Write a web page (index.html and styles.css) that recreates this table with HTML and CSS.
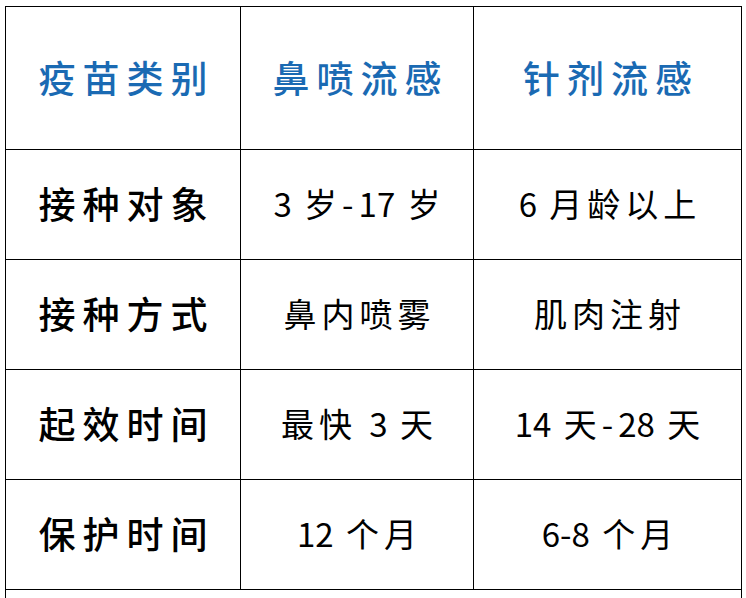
FILE: index.html
```html
<!DOCTYPE html>
<html lang="zh-CN">
<head>
<meta charset="utf-8">
<title>疫苗对比</title>
<link rel="stylesheet" href="styles.css">
</head>
<body>
<div class="page">
<table class="vax">
  <colgroup>
    <col class="c1">
    <col class="c2">
    <col class="c3">
  </colgroup>
  <tr class="head">
    <th>疫苗类别</th>
    <th>鼻喷流感</th>
    <th>针剂流感</th>
  </tr>
  <tr class="row">
    <td class="label">接种对象</td>
    <td class="val"><span class="n">3</span> 岁-<span class="n">17</span> 岁</td>
    <td class="val"><span class="n">6</span> 月龄以上</td>
  </tr>
  <tr class="row">
    <td class="label">接种方式</td>
    <td class="val">鼻内喷雾</td>
    <td class="val">肌肉注射</td>
  </tr>
  <tr class="row">
    <td class="label">起效时间</td>
    <td class="val">最快 <span class="n">3</span> 天</td>
    <td class="val"><span class="n">14</span> 天-<span class="n">28</span> 天</td>
  </tr>
  <tr class="row">
    <td class="label">保护时间</td>
    <td class="val"><span class="n">12</span> 个月</td>
    <td class="val"><span class="n">6-8</span> 个月</td>
  </tr>
  <tr class="rest">
    <td colspan="3"></td>
  </tr>
</table>
</div>
</body>
</html>
```

FILE: styles.css
```css
html, body {
  margin: 0;
  padding: 0;
  background: #ffffff;
}

.page {
  padding: 6px 0 0 5px;
  height: 592px;
  overflow: hidden;
}

.vax {
  border-collapse: collapse;
  table-layout: fixed;
  width: 736px;
  font-family: "Noto Sans CJK SC", sans-serif;
  color: #000;
}

.c1 { width: 235px; }
.c2 { width: 233px; }
.c3 { width: 268px; }

.vax th,
.vax td {
  border: 1px solid #000;
  padding: 0 0 3px 0;
  text-align: center;
  vertical-align: middle;
  white-space: nowrap;
}

.head { height: 143px; }
.row { height: 110px; }
.rest { height: 110px; }

.head th {
  font-size: 37px;
  font-weight: 500;
  color: #1a6ab3;
  letter-spacing: 7px;
  padding-left: 7px;
}

.vax .label {
  font-size: 37px;
  font-weight: 500;
  letter-spacing: 7px;
  padding-left: 7px;
}

.vax .val {
  font-size: 33px;
  font-weight: 400;
  letter-spacing: 5px;
  padding-left: 5px;
}

.n {
  letter-spacing: 0;
}
```
